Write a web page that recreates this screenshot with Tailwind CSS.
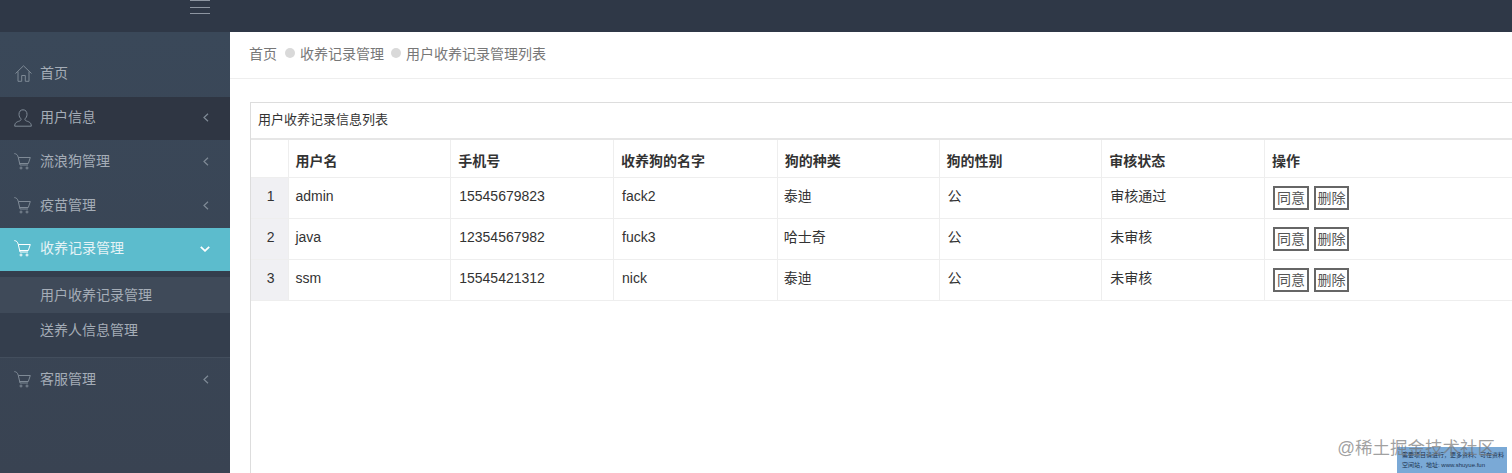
<!DOCTYPE html>
<html lang="zh-CN">

<head>
  <meta charset="UTF-8">
  <title>用户收养记录管理列表</title>
  <script src="https://cdn.jsdelivr.net/npm/@tailwindcss/browser@4"></script>
</head>

<body class="h-[473px] overflow-hidden bg-white font-['Liberation_Sans','Noto_Sans_CJK_SC',sans-serif] text-[14px] text-[#333]">
  <!-- Top bar -->
  <header class="flex h-8 bg-[#2f3847]">
    <div class="flex w-[230px] justify-end pr-5">
      <div class="flex h-[14px] w-5 flex-col justify-between">
        <span class="h-px bg-[#8d95a1]"></span>
        <span class="h-px bg-[#8d95a1]"></span>
        <span class="h-px bg-[#8d95a1]"></span>
      </div>
    </div>
  </header>

  <div class="relative flex h-[441px]">
    <!-- Sidebar -->
    <aside class="w-[230px] shrink-0 bg-gradient-to-b from-[#3a4859] to-[#394352] pt-[21px] text-[#a5adb7]">
      <a class="flex h-11 items-center pb-[4px] pl-[15px]">
        <svg class="mr-[8px] size-[17px]" viewBox="0 0 17 17" fill="none" stroke="#7f8a96" stroke-width="1"><path d="M.5 8.500 8.500.8l8 7.700M3 6.500V16.300h3.700v-5.800h3.600v5.800H14V6.500"/></svg>
        <span>首页</span>
      </a>
      <a class="flex h-[43px] items-center bg-[#2f3643] pb-[2px] pl-[14px] pr-[21px]">
        <svg class="mr-[8px] size-[18px]" viewBox="0 0 18 18" fill="none" stroke="#7f8a96" stroke-width="1"><path d="M9 .8C6.300.8 5 2.800 5 5.300c0 2.200 1 3.700 2 4.500.3 1-.2 1.700-1.500 2.200C3 12.900.7 13.400.7 17.200h16.600c0-3.800-2.300-4.300-4.800-5.200-1.300-.5-1.800-1.200-1.500-2.200 1-.8 2-2.300 2-4.500C13 2.800 11.700.8 9 .8Z"/></svg>
        <span class="flex-1">用户信息</span>
        <svg class="h-[9px] w-[6px]" viewBox="0 0 6 9" fill="none" stroke="#7f8a96" stroke-width="1.200"><path d="M5 .7 1 4.500 5 8.300"/></svg>
      </a>
      <a class="flex h-11 items-center pb-[2px] pl-[14px] pr-[21px]">
        <svg class="mr-[9px] size-[17px]" viewBox="0 0 17 17" fill="none" stroke="#7f8a96" stroke-width="1"><path d="M.3.6C2.500.8 3.600 1.800 4.300 4.500L6 12h8M4.300 4.500h12l-2 6H5.700"/><circle cx="7" cy="15" r="1"/><circle cx="13" cy="15" r="1"/></svg>
        <span class="flex-1">流浪狗管理</span>
        <svg class="h-[9px] w-[6px]" viewBox="0 0 6 9" fill="none" stroke="#7f8a96" stroke-width="1.200"><path d="M5 .7 1 4.500 5 8.300"/></svg>
      </a>
      <a class="flex h-11 items-center pb-[2px] pl-[14px] pr-[21px]">
        <svg class="mr-[9px] size-[17px]" viewBox="0 0 17 17" fill="none" stroke="#7f8a96" stroke-width="1"><path d="M.3.6C2.500.8 3.600 1.800 4.300 4.500L6 12h8M4.300 4.500h12l-2 6H5.700"/><circle cx="7" cy="15" r="1"/><circle cx="13" cy="15" r="1"/></svg>
        <span class="flex-1">疫苗管理</span>
        <svg class="h-[9px] w-[6px]" viewBox="0 0 6 9" fill="none" stroke="#7f8a96" stroke-width="1.200"><path d="M5 .7 1 4.500 5 8.300"/></svg>
      </a>
      <a class="flex h-[43px] items-center bg-[#5cbccd] pb-[2px] pl-[14px] pr-[20px] text-[#e6f3f6]">
        <svg class="mr-[9px] size-[17px]" viewBox="0 0 17 17" fill="none" stroke="#ffffff" stroke-width="1"><path d="M.3.6C2.500.8 3.600 1.800 4.300 4.500L6 12h8M4.300 4.500h12l-2 6H5.700"/><circle cx="7" cy="15" r="1"/><circle cx="13" cy="15" r="1"/></svg>
        <span class="flex-1">收养记录管理</span>
        <svg class="h-[6px] w-[10px]" viewBox="0 0 10 6" fill="none" stroke="#ffffff" stroke-width="1.800"><path d="M.8.8 5 4.800 9.200.8"/></svg>
      </a>
      <div class="border-b border-[#434e5d] bg-[#343e4d] pt-[6px] pb-[9px]">
        <a class="flex h-[36px] items-center bg-[#3f4a59] pl-[40px]">用户收养记录管理</a>
        <a class="flex h-[35px] items-center pb-[1px] pl-[40px]">送养人信息管理</a>
      </div>
      <a class="flex h-11 items-center pb-[2px] pl-[14px] pr-[21px]">
        <svg class="mr-[9px] size-[17px]" viewBox="0 0 17 17" fill="none" stroke="#7f8a96" stroke-width="1"><path d="M.3.6C2.500.8 3.600 1.800 4.300 4.500L6 12h8M4.300 4.500h12l-2 6H5.700"/><circle cx="7" cy="15" r="1"/><circle cx="13" cy="15" r="1"/></svg>
        <span class="flex-1">客服管理</span>
        <svg class="h-[9px] w-[6px]" viewBox="0 0 6 9" fill="none" stroke="#7f8a96" stroke-width="1.200"><path d="M5 .7 1 4.500 5 8.300"/></svg>
      </a>
    </aside>

    <!-- Main -->
    <main class="min-w-0 flex-1 overflow-hidden">
      <nav class="flex h-[47px] items-center border-b border-[#eeeeee] pb-[2px] pl-[19px] text-[#777]">
        <span>首页</span>
        <span class="mr-[5px] mb-[2px] ml-2 size-[10px] rounded-full bg-[#d9d9d9]"></span>
        <span>收养记录管理</span>
        <span class="mr-[5px] mb-[2px] ml-[7px] size-[10px] rounded-full bg-[#d9d9d9]"></span>
        <span>用户收养记录管理列表</span>
      </nav>
      <section class="mt-[23px] ml-5 h-[400px] w-[1400px] border border-[#dddddd]">
        <h2 class="flex h-[37px] items-center border-b-2 border-[#e6e6e6] pb-[2px] pl-[7px] text-[13px] text-[#333]">用户收养记录信息列表</h2>
        <table class="table-fixed border-collapse">
          <colgroup>
            <col class="w-[38px]">
            <col class="w-[162px]">
            <col class="w-[163px]">
            <col class="w-[164px]">
            <col class="w-[162px]">
            <col class="w-[163px]">
            <col class="w-[163px]">
            <col class="w-[385px]">
          </colgroup>
          <thead>
            <tr class="h-[37px] border-b border-[#eeeeee] text-left font-bold [&>th]:border-l [&>th]:border-[#eeeeee] [&>th]:pt-[6px] [&>th]:pl-[7px] [&>th:first-child]:border-l-0 [&>th:nth-child(2)]:pl-[6px]">
              <th></th>
              <th>用户名</th>
              <th>手机号</th>
              <th>收养狗的名字</th>
              <th>狗的种类</th>
              <th>狗的性别</th>
              <th>审核状态</th>
              <th>操作</th>
            </tr>
          </thead>
          <tbody class="[&>tr]:h-[41px] [&>tr]:border-b [&>tr]:border-[#eeeeee] [&_td]:border-l [&_td]:border-[#eeeeee] [&_td]:pb-[2px] [&_td]:pl-[8px] [&_td:first-child]:border-l-0 [&_td:first-child]:bg-[#f0f0f3] [&_td:first-child]:pl-[2px] [&_td:first-child]:text-center [&_td:nth-child(2)]:pl-[6px] [&_td:nth-child(5)]:pl-[6px] [&_td:last-child]:pb-0">
            <tr>
              <td>1</td>
              <td>admin</td>
              <td>15545679823</td>
              <td>fack2</td>
              <td>泰迪</td>
              <td>公</td>
              <td>审核通过</td>
              <td>
                <div class="flex gap-[5px]">
                  <button class="h-6 w-[36px] border-2 border-[#666] text-[#555]">同意</button>
                  <button class="h-6 w-[35px] border-2 border-[#666] text-[#555]">删除</button>
                </div>
              </td>
            </tr>
            <tr>
              <td>2</td>
              <td>java</td>
              <td>12354567982</td>
              <td>fuck3</td>
              <td>哈士奇</td>
              <td>公</td>
              <td>未审核</td>
              <td>
                <div class="flex gap-[5px]">
                  <button class="h-6 w-[36px] border-2 border-[#666] text-[#555]">同意</button>
                  <button class="h-6 w-[35px] border-2 border-[#666] text-[#555]">删除</button>
                </div>
              </td>
            </tr>
            <tr>
              <td>3</td>
              <td>ssm</td>
              <td>15545421312</td>
              <td>nick</td>
              <td>泰迪</td>
              <td>公</td>
              <td>未审核</td>
              <td>
                <div class="flex gap-[5px]">
                  <button class="h-6 w-[36px] border-2 border-[#666] text-[#555]">同意</button>
                  <button class="h-6 w-[35px] border-2 border-[#666] text-[#555]">删除</button>
                </div>
              </td>
            </tr>
          </tbody>
        </table>
      </section>
    </main>

    <!-- Watermarks -->
    <div class="absolute right-[5px] bottom-0 h-[26px] w-[110px] bg-[#7aa9d6] px-[5px] pt-[3px] text-[6px] leading-[10px] text-[#1c3350]">
      <p class="whitespace-nowrap">需要项目请进行，更多资料、可在资料</p>
      <p class="whitespace-nowrap">空间站，地址: www.shuyue.fun</p>
    </div>
    <span class="absolute right-[17px] bottom-[13px] text-[17.5px] leading-[24px] whitespace-nowrap text-[#777]/70">@稀土掘金技术社区</span>
  </div>
</body>

</html>
